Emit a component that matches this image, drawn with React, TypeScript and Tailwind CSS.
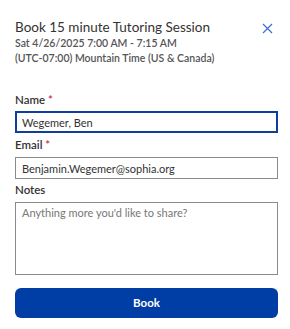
import React from 'react'

export default function App() {
  return (
    <div className="w-[290px] h-[329px] bg-white pl-[15px] pr-[12px] pt-[17px] font-['Lato',sans-serif] text-[#242424]">
      <div className="flex justify-between items-start">
        <div>
          <h1 className="text-[13.5px] leading-[20px] text-[#333]">Book 15 minute Tutoring Session</h1>
          <p className="-mt-[1px] text-[10.5px] leading-[15px] font-semibold text-[#555]">Sat 4/26/2025 7:00 AM - 7:15 AM</p>
          <p className="text-[10.5px] leading-[15px] font-semibold text-[#555]">(UTC-07:00) Mountain Time (US &amp; Canada)</p>
        </div>
        <button className="mt-[6px] mr-[5px] text-[#3a6fd0]">
          <svg width="11" height="11" viewBox="0 0 11 11" stroke="currentColor" strokeWidth="1.2" fill="none">
            <path d="M1 1L10 10M10 1L1 10" />
          </svg>
        </button>
      </div>

      <form className="mt-[26px] flex flex-col">
        <label className="text-[11.5px] leading-[16px] font-semibold text-[#333]">
          Name <span className="text-[#c4314b]">*</span>
        </label>
        <input
          defaultValue="Wegemer, Ben"
          className="mt-[3px] h-[22px] border-2 border-[#0f3f9c] px-[5px] text-[11px] text-[#333] outline-none"
        />
        <label className="mt-[4px] text-[11.5px] leading-[16px] font-semibold text-[#333]">
          Email <span className="text-[#c4314b]">*</span>
        </label>
        <input
          defaultValue="Benjamin.Wegemer@sophia.org"
          className="mt-[4px] h-[22px] border border-[#8a8a8a] px-[6px] text-[11px] text-[#333] outline-none"
        />
        <label className="mt-[3px] text-[11.5px] leading-[16px] font-semibold text-[#333]">Notes</label>
        <textarea
          placeholder="Anything more you'd like to share?"
          className="mt-[4px] h-[73px] resize-none border border-[#8a8a8a] px-[6px] py-[2px] text-[11px] text-[#333] placeholder:text-[#777] outline-none"
        />
        <button
          type="button"
          className="mt-[13px] h-[30px] rounded-[6px] bg-[#003da5] text-white text-[11.5px] font-bold"
        >
          Book
        </button>
      </form>
    </div>
  )
}
